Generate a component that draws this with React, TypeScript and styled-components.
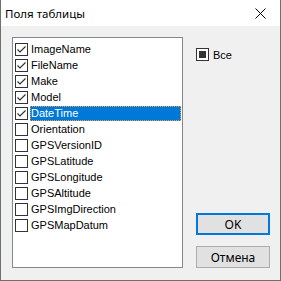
import React from 'react';
import styled, { createGlobalStyle } from 'styled-components';

const GlobalStyle = createGlobalStyle`
html, body {
    margin: 0;
    padding: 0;
    background: #f0f0f0;
}
`;

const Window = styled.div`
width: 281px;
height: 281px;
box-sizing: border-box;
border: 1px solid #6f6f6f;
border-top: none;
background: #f0f0f0;
display: flex;
flex-direction: column;
font-family: "Liberation Sans", Arial, sans-serif;
`;

const TitleBar = styled.div`
height: 26px;
flex: 0 0 26px;
background: #fff;
display: flex;
align-items: center;
justify-content: space-between;
padding-left: 4px;
font-family: "Noto Sans", "Open Sans", sans-serif;
font-size: 11.5px;
color: #000;
`;

const CloseButton = styled.div`
width: 36px;
height: 26px;
display: flex;
align-items: center;
justify-content: center;
margin-right: 2px;
`;

const Body = styled.div`
flex: 1;
display: flex;
padding: 11px 0 0 11px;
`;

const ListBox = styled.div`
width: 171px;
height: 231px;
box-sizing: border-box;
border: 1px solid #828790;
background: #fff;
padding: 3px 0 0 2px;
display: flex;
flex-direction: column;
`;

const Row = styled.div`
height: 16px;
display: flex;
align-items: center;
`;

const Box = styled.div`
width: 13px;
height: 13px;
box-sizing: border-box;
border: 1px solid #333;
background: #fff;
display: flex;
align-items: center;
justify-content: center;
flex: 0 0 13px;
`;

const Label = styled.div<{ selected?: boolean }>`
flex: 1;
height: 15px;
margin-left: 2px;
margin-right: 1px;
box-sizing: border-box;
display: flex;
align-items: center;
padding-left: 1px;
font-size: 11px;
color: ${({ selected }) => selected ? "#fff" : "#000"};
background: ${({ selected }) => selected ? "#0078d7" : "transparent"};
outline: ${({ selected }) => selected ? "1px dotted #f3a33a" : "none"};
outline-offset: -1px;
`;

const Side = styled.div`
flex: 1;
display: flex;
flex-direction: column;
padding-left: 13px;
`;

const AllRow = styled.div`
display: flex;
align-items: center;
gap: 4px;
margin-top: 11px;
font-size: 11px;
`;

const Indeterminate = styled.div`
width: 7px;
height: 7px;
background: #333;
`;

const Buttons = styled.div`
margin-top: auto;
margin-bottom: 12px;
display: flex;
flex-direction: column;
gap: 11px;
`;

const Button = styled.div<{ primary?: boolean }>`
width: 74px;
height: 22px;
box-sizing: border-box;
border: ${({ primary }) => primary ? "2px solid #0078d7" : "1px solid #adadad"};
background: #e1e1e1;
display: flex;
align-items: center;
justify-content: center;
font-family: "Noto Sans", "Open Sans", sans-serif;
font-size: 12px;
color: #000;
`;

const Check = () => (
    <svg width="11" height="11" viewBox="0 0 11 11">
        <path d="M1.5 5.5 L4 8 L9.5 2.5" fill="none" stroke="#333" strokeWidth="1.2" />
    </svg>
);

const fields: [string, boolean][] = [
    ["ImageName", true],
    ["FileName", true],
    ["Make", true],
    ["Model", true],
    ["DateTime", true],
    ["Orientation", false],
    ["GPSVersionID", false],
    ["GPSLatitude", false],
    ["GPSLongitude", false],
    ["GPSAltitude", false],
    ["GPSImgDirection", false],
    ["GPSMapDatum", false],
];

export default function App() {
    return <>
        <GlobalStyle />
        <Window>
            <TitleBar>
                <span>Поля таблицы</span>
                <CloseButton>
                    <svg width="11" height="11" viewBox="0 0 11 11">
                        <path d="M0.5 0.5 L10.5 10.5 M10.5 0.5 L0.5 10.5" stroke="#000" strokeWidth="1" />
                    </svg>
                </CloseButton>
            </TitleBar>
            <Body>
                <ListBox>
                    {fields.map(([name, checked]) => (
                        <Row key={name}>
                            <Box>{checked && <Check />}</Box>
                            <Label selected={name === "DateTime"}>{name}</Label>
                        </Row>
                    ))}
                </ListBox>
                <Side>
                    <AllRow>
                        <Box><Indeterminate /></Box>
                        <span>Все</span>
                    </AllRow>
                    <Buttons>
                        <Button primary>OK</Button>
                        <Button>Отмена</Button>
                    </Buttons>
                </Side>
            </Body>
        </Window>
    </>;
}
